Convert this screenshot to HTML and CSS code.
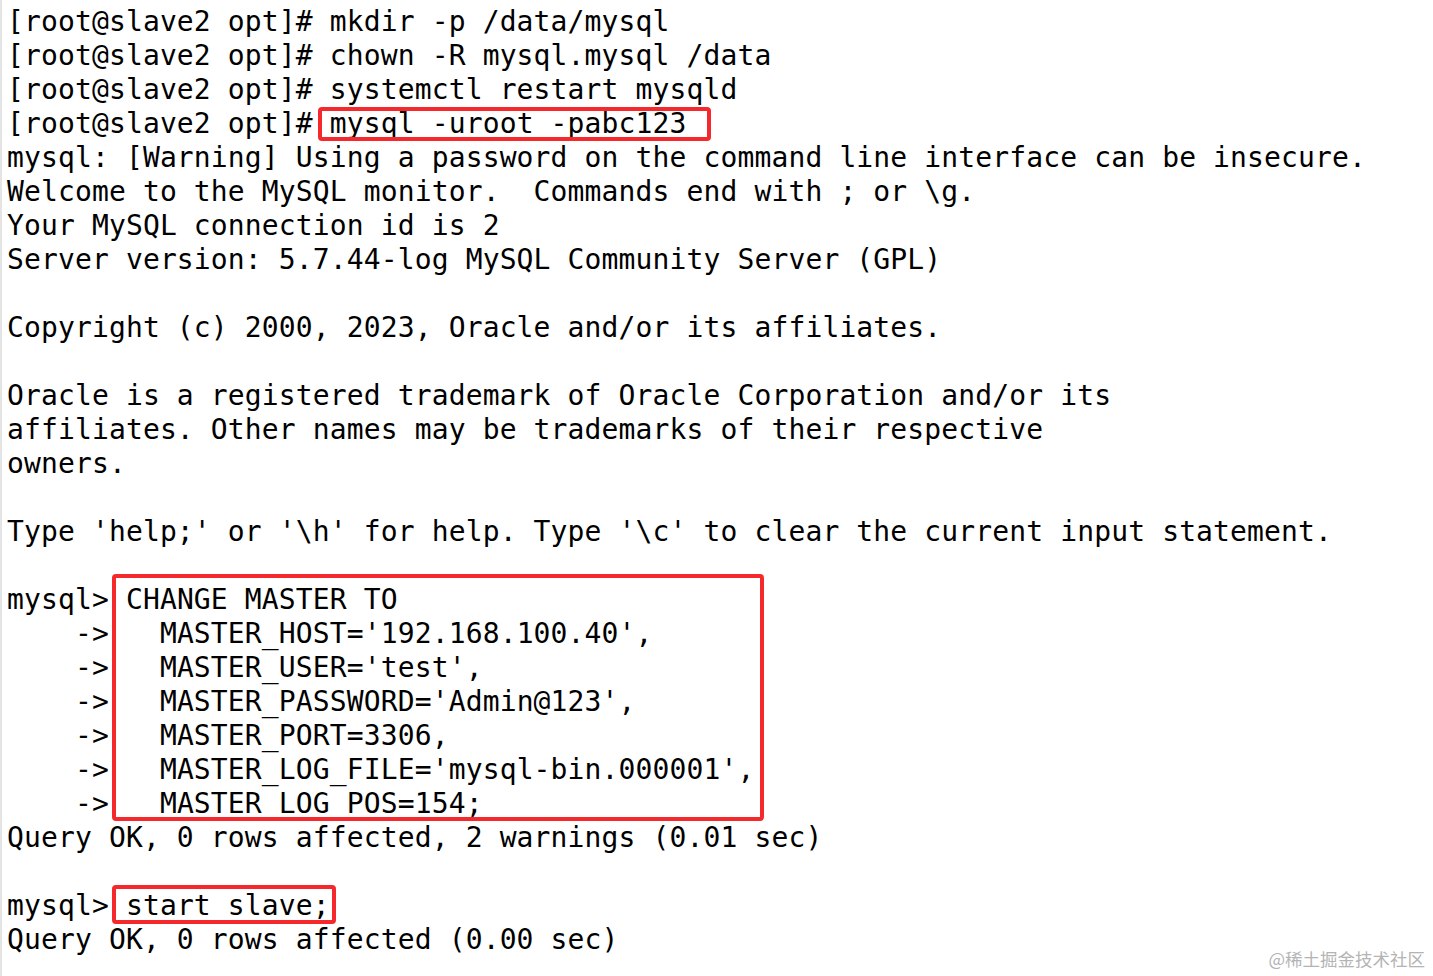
FILE: index.html
```html
<!DOCTYPE html>
<html lang="zh-CN">
<head>
<meta charset="utf-8">
<title>mysql slave</title>
<link rel="stylesheet" href="styles.css">
</head>
<body>
<main class="term">
<div class="line">[root@slave2 opt]# mkdir -p /data/mysql</div>
<div class="line">[root@slave2 opt]# chown -R mysql.mysql /data</div>
<div class="line">[root@slave2 opt]# systemctl restart mysqld</div>
<div class="line">[root@slave2 opt]# <span class="hl hl-login">mysql -uroot -pabc123</span></div>
<div class="line">mysql: [Warning] Using a password on the command line interface can be insecure.</div>
<div class="line">Welcome to the MySQL monitor.  Commands end with ; or \g.</div>
<div class="line">Your MySQL connection id is 2</div>
<div class="line">Server version: 5.7.44-log MySQL Community Server (GPL)</div>
<div class="line"> </div>
<div class="line">Copyright (c) 2000, 2023, Oracle and/or its affiliates.</div>
<div class="line"> </div>
<div class="line">Oracle is a registered trademark of Oracle Corporation and/or its</div>
<div class="line">affiliates. Other names may be trademarks of their respective</div>
<div class="line">owners.</div>
<div class="line"> </div>
<div class="line">Type 'help;' or '\h' for help. Type '\c' to clear the current input statement.</div>
<div class="line"> </div>
<div class="block">
  <div class="prompts">
    <div class="line">mysql> </div>
    <div class="line">    -> </div>
    <div class="line">    -> </div>
    <div class="line">    -> </div>
    <div class="line">    -> </div>
    <div class="line">    -> </div>
    <div class="line">    -> </div>
  </div>
  <div class="hl hl-change">
    <div class="line">CHANGE MASTER TO</div>
    <div class="line">  MASTER_HOST='192.168.100.40',</div>
    <div class="line">  MASTER_USER='test',</div>
    <div class="line">  MASTER_PASSWORD='Admin@123',</div>
    <div class="line">  MASTER_PORT=3306,</div>
    <div class="line">  MASTER_LOG_FILE='mysql-bin.000001',</div>
    <div class="line">  MASTER_LOG_POS=154;</div>
  </div>
</div>
<div class="line">Query OK, 0 rows affected, 2 warnings (0.01 sec)</div>
<div class="line"> </div>
<div class="line">mysql> <span class="hl hl-start">start slave;</span></div>
<div class="line">Query OK, 0 rows affected (0.00 sec)</div>
</main>
<div class="watermark">@稀土掘金技术社区</div>
</body>
</html>
```

FILE: styles.css
```css
html, body {
  margin: 0;
  padding: 0;
  background: #ffffff;
}

body {
  width: 1433px;
  height: 976px;
  overflow: hidden;
  position: relative;
}

.term {
  box-sizing: border-box;
  height: 976px;
  padding: 5px 0 0 5px;
  border-left: 2px solid #e4e4e4;
  font-family: "DejaVu Sans Mono", "Liberation Mono", monospace;
  font-size: 28px;
  line-height: 34px;
  letter-spacing: 0.13px;
  color: #000000;
}

.term .line {
  white-space: pre;
  height: 34px;
}

.block {
  display: flex;
  align-items: flex-start;
}

.prompts {
  flex: none;
}

.hl {
  position: relative;
}

.hl::after {
  content: "";
  position: absolute;
  border: 4px solid #f5292b;
  border-radius: 4px;
  pointer-events: none;
}

.hl-login,
.hl-start {
  display: inline-block;
  height: 34px;
  vertical-align: top;
}

.hl-login::after {
  top: 0;
  bottom: 0;
  left: -12px;
  right: -24px;
}

.hl-change {
  flex: none;
}

.hl-change::after {
  top: -9px;
  bottom: 0;
  left: -14px;
  right: -10px;
}

.hl-start::after {
  top: -4px;
  bottom: -1px;
  left: -14px;
  right: -6px;
}

.watermark {
  position: absolute;
  right: 8px;
  bottom: 6px;
  font-family: "Noto Sans CJK SC", sans-serif;
  font-size: 17.5px;
  line-height: 22px;
  color: #b4b4b4;
}
```
